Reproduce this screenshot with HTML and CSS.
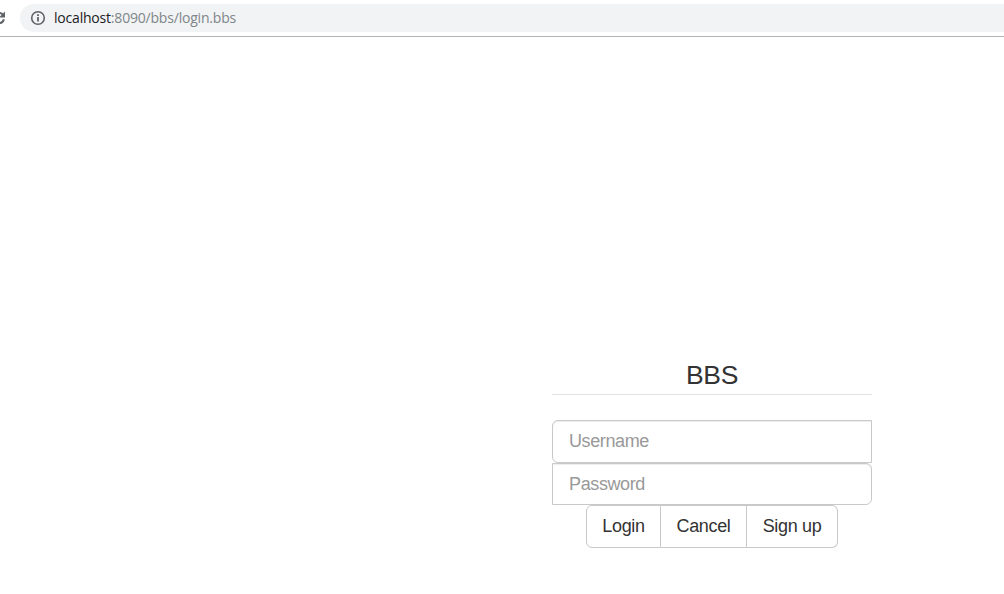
FILE: index.html
```html
<!DOCTYPE html>
<html lang="en">
<head>
<meta charset="utf-8">
<title>BBS</title>
<link rel="stylesheet" href="styles.css">
</head>
<body>
<header class="toolbar">
  <svg class="reload" width="7" height="16" viewBox="9 0 7 16" fill="none">
    <path d="M12.2 5.2A5.1 5.1 0 0 0 8 2.9M8 13.1A5.1 5.1 0 0 0 12.9 9.2" stroke="#5f6368" stroke-width="2"/>
    <path d="M14 1.4v6H8.2z" fill="#5f6368"/>
  </svg>
  <div class="address">
    <svg class="info" width="16" height="16" viewBox="0 0 16 16" fill="none">
      <circle cx="8" cy="8" r="6.3" stroke="#5f6368" stroke-width="1.6"/>
      <path d="M8 7v4.5M8 4.3v1.7" stroke="#5f6368" stroke-width="1.8"/>
    </svg>
    <span class="url"><span class="host">localhost</span>:8090/bbs/login.bbs</span>
  </div>
</header>
<main class="page">
  <form class="login">
    <h1 class="title">BBS</h1>
    <input class="field field-user" type="text" placeholder="Username">
    <input class="field field-pass" type="password" placeholder="Password">
    <div class="actions">
      <button class="btn btn-login" type="button">Login</button>
      <button class="btn btn-cancel" type="button">Cancel</button>
      <button class="btn btn-signup" type="button">Sign up</button>
    </div>
  </form>
</main>
</body>
</html>
```
FILE: styles.css
```css
* { box-sizing: border-box; }
body {
  margin: 0;
  height: 594px;
  overflow: hidden;
  background: #fff;
  font-family: "Liberation Sans", Arial, sans-serif;
}
.toolbar {
  display: flex;
  height: 37px;
  padding-top: 4px;
  border-bottom: 1px solid #b4b4b4;
}
.reload { margin: 6px 13px 0 0; }
.address {
  display: flex;
  flex: 1;
  align-items: center;
  height: 28px;
  padding-left: 10px;
  border-radius: 14px 0 0 14px;
  background: #f1f3f4;
}
.url {
  margin-left: 8px;
  font: 14px/20px "Open Sans", "Noto Sans", sans-serif;
  letter-spacing: -0.2px;
  color: #80868b;
}
.host { color: #202124; }
.page { padding: 321px 0 0 552px; }
.login { width: 320px; }
.title {
  height: 37px;
  margin: 0 0 25px;
  border-bottom: 1px solid #e3e3e3;
  font-size: 26.5px;
  font-weight: 400;
  line-height: 34px;
  letter-spacing: -0.3px;
  text-align: center;
  color: #333;
}
.field {
  display: block;
  width: 320px;
  margin: 0;
  padding: 0 16px 1px;
  border: 1px solid #c9c9c9;
  background: #fff;
  box-shadow: inset 0 1px 1px rgba(0, 0, 0, .075);
  font: 18px/24px "Liberation Sans", Arial, sans-serif;
  letter-spacing: -0.38px;
  color: #555;
}
.field::placeholder { color: #999; opacity: 1; }
.field-user { height: 43px; border-radius: 6px 0 0 6px; }
.field-pass { height: 42px; padding: 1px 16px 0; border-radius: 0 6px 6px 0; }
.actions { display: flex; justify-content: center; }
.btn {
  height: 43px;
  margin: 0;
  padding: 0 0 2px;
  border: 1px solid #c9c9c9;
  background: #fff;
  font: 18px/24px "Liberation Sans", Arial, sans-serif;
  letter-spacing: -0.35px;
  color: #333;
}
.btn-login { width: 75px; border-radius: 6px 0 0 6px; }
.btn-cancel { width: 86px; border-left: 0; }
.btn-signup { width: 91px; border-left: 0; border-radius: 0 6px 6px 0; }
```
